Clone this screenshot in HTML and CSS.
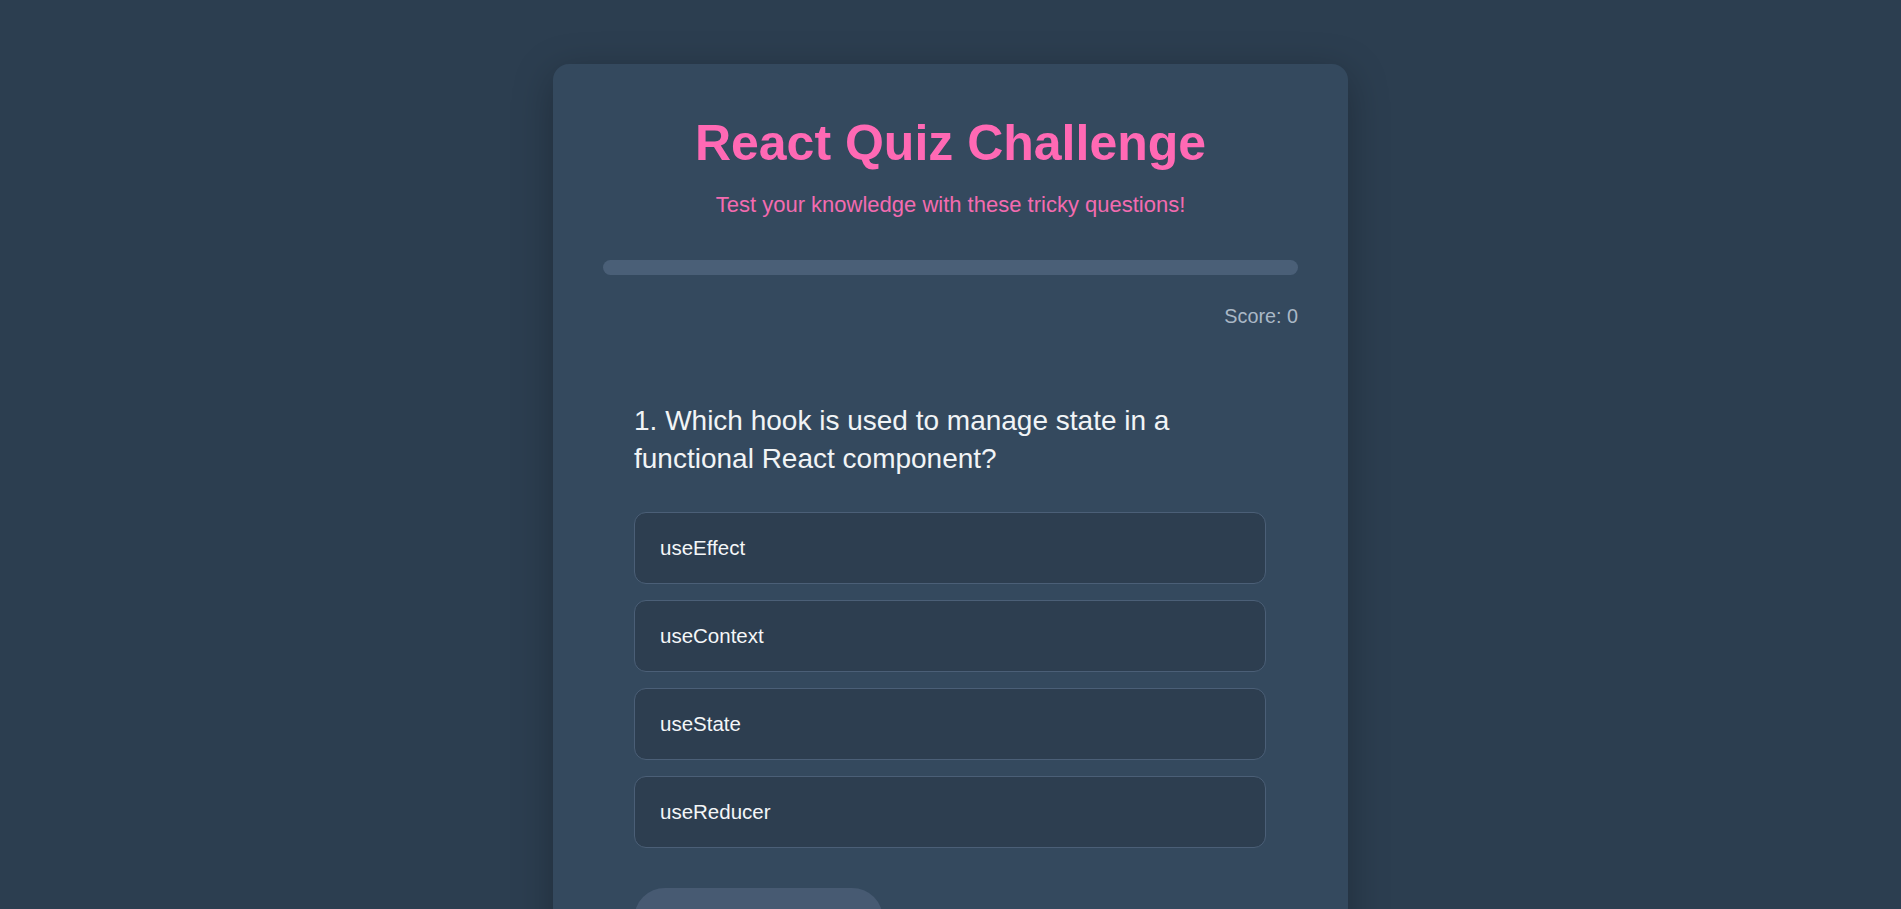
FILE: index.html
```html
<!DOCTYPE html>
<html lang="en">
<head>
<meta charset="utf-8">
<title>React Quiz Challenge</title>
<link rel="stylesheet" href="styles.css">
</head>
<body>
<div class="page">
  <main class="card">
    <header class="header">
      <h1 class="title">React Quiz Challenge</h1>
      <p class="subtitle">Test your knowledge with these tricky questions!</p>
    </header>
    <div class="progress"><div class="progress-fill" style="width: 0%"></div></div>
    <div class="score">Score: 0</div>
    <section class="question">
      <h2 class="question-text">1. Which hook is used to manage state in a functional React component?</h2>
      <div class="options">
        <button class="option">useEffect</button>
        <button class="option">useContext</button>
        <button class="option">useState</button>
        <button class="option">useReducer</button>
      </div>
      <button class="next" disabled>Next Question</button>
    </section>
  </main>
</div>
</body>
</html>
```

FILE: styles.css
```css
* { box-sizing: border-box; }

html, body {
  margin: 0;
  padding: 0;
}

body {
  background: #2c3e50;
  font-family: "Liberation Sans", Arial, Helvetica, sans-serif;
  color: #ecf0f1;
}

.page {
  padding: 64px 0 64px;
}

.card {
  width: 795px;
  margin: 0 auto;
  background: #34495e;
  border-radius: 16px;
  padding: 50px;
  box-shadow: 0 10px 40px rgba(0, 0, 0, 0.28);
}

.header {
  text-align: center;
}

.title {
  margin: 0 0 20px;
  font-size: 50px;
  font-weight: 700;
  line-height: normal;
  color: #ff69b4;
}

.subtitle {
  margin: 0;
  font-size: 22px;
  line-height: normal;
  color: #f36bb0;
}

.progress {
  margin-top: 42px;
  height: 15px;
  border-radius: 8px;
  background: #4a5f77;
  overflow: hidden;
}

.progress-fill {
  height: 100%;
  background: #ff69b4;
}

.score {
  margin-top: 30px;
  text-align: right;
  font-size: 19.8px;
  line-height: normal;
  color: #aab8c6;
}

.question {
  padding: 0 32px 0 31px;
  margin-top: 74px;
}

.question-text {
  margin: 0 0 34px;
  font-size: 28px;
  font-weight: 400;
  line-height: 38px;
  color: #f1f4f6;
}

.options {
  display: flex;
  flex-direction: column;
  gap: 16px;
}

.option {
  display: flex;
  align-items: center;
  height: 72px;
  width: 100%;
  padding: 0 25px;
  background: #2d3e50;
  border: 1px solid #4b5f77;
  border-radius: 12px;
  font-family: inherit;
  font-size: 20.5px;
  color: #f4f6f8;
  text-align: left;
}

.next {
  display: block;
  margin-top: 40px;
  width: 249px;
  border: none;
  border-radius: 31px;
  background: #475a72;
  color: #b8c4d0;
  font-family: inherit;
  font-size: 20px;
  font-weight: 700;
  padding: 24px 0 16px;
  line-height: 24px;
}
```
